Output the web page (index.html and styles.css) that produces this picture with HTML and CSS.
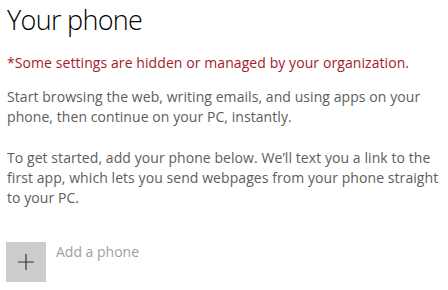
FILE: index.html
```html
<!DOCTYPE html>
<html>
<head>
<meta charset="utf-8">
<link rel="stylesheet" href="styles.css">
</head>
<body>
<div class="page">
  <h1 class="title">Your phone</h1>
  <p class="warning">*Some settings are hidden or managed by your organization.</p>
  <p class="text">Start browsing the web, writing emails, and using apps on your phone, then continue on your PC, instantly.</p>
  <p class="text">To get started, add your phone below. We’ll text you a link to the first app, which lets you send webpages from your phone straight to your PC.</p>
  <div class="add">
    <div class="add-icon">
      <svg width="16" height="16" viewBox="0 0 16 16"><path d="M8 0V16M0 8H16" stroke="#333" stroke-width="1.2" fill="none"/></svg>
    </div>
    <span class="add-label">Add a phone</span>
  </div>
</div>
</body>
</html>
```
FILE: styles.css
```css
html, body { margin: 0; padding: 0; background: #fff; }
.page {
  padding: 0 0 0 7px;
  font-family: "Open Sans", sans-serif;
  width: 438px;
}
.title {
  margin: 0;
  padding-top: 2px;
  font-size: 27px;
  font-weight: 300;
  line-height: 36px;
  color: #000;
  letter-spacing: -0.7px;
}
.warning {
  margin: 15px 0 0 0;
  font-size: 14px;
  line-height: 20px;
  color: #a4192d;
  letter-spacing: 0.08px;
}
.text {
  margin: 14px 0 0 0;
  font-size: 14px;
  line-height: 20px;
  color: #5d5d5d;
  letter-spacing: 0.07px;
}
.text + .text { margin-top: 21px; }
.add {
  display: flex;
  align-items: flex-start;
  gap: 10px;
  margin-top: 34px;
  margin-left: -1px;
}
.add-icon {
  width: 40px;
  height: 40px;
  background: #cccccc;
  display: flex;
  align-items: center;
  justify-content: center;
}
.add-label {
  font-size: 14px;
  line-height: 20px;
  color: #a0a0a0;
  margin-top: 0;
}
```
